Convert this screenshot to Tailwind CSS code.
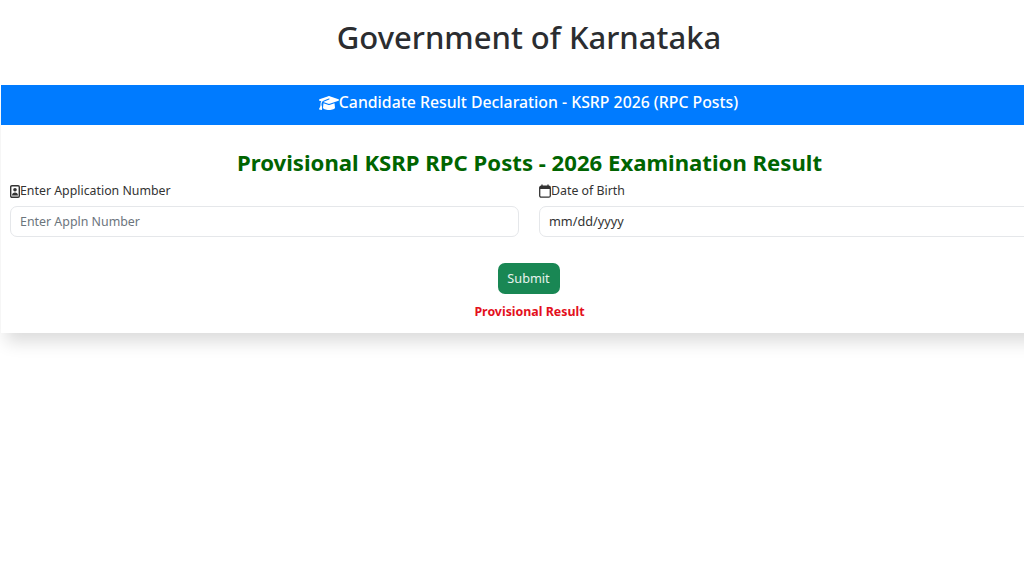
<!DOCTYPE html>
<html lang="en">
<head>
  <meta charset="UTF-8" />
  <meta name="viewport" content="width=device-width, initial-scale=1.0" />
  <title>Government of Karnataka</title>
  <script src="https://cdn.jsdelivr.net/npm/@tailwindcss/browser@4"></script>
</head>
<body class="bg-white h-[583px] overflow-hidden font-['Noto_Sans',sans-serif] text-[#333]">

  <div class="w-[1058px]">
    <h1 class="h-[85px] pt-[15px] text-center text-[31px] leading-[44px] font-medium text-[#2b2d30]">Government of Karnataka</h1>

    <div class="ml-px bg-white shadow-[0_14px_16px_-5px_rgba(0,0,0,0.14)]">
      <div class="h-10 pb-[4px] pr-[2px] bg-[#007bff] flex items-center justify-center text-white text-[15.800px] font-medium">
        <svg class="w-5 h-4 shrink-0" viewBox="0 0 640 512" fill="currentColor"><path d="M320 32c-8 0-16 1.400-23.400 4.100L15.800 137.400C6.300 140.900 0 149.900 0 160s6.300 19.100 15.800 22.600l57.900 20.900C57.300 229.300 48 259.800 48 291.900V320c0 28.400-10.800 57.700-22.300 80.800-6.500 13-13.900 25.800-22.500 37.600-3.200 4.300-4.100 9.900-2.300 15s6 8.900 11.200 10.200l64 16c4.200 1.100 8.700 .3 12.400-2s6.300-6.100 7.100-10.400c8.600-42.800 4.300-81.200-2.100-108.700-3.200-14.200-7.500-28.700-13.500-42V291.900c0-30.200 10.200-58.700 27.900-81.500 12.900-15.500 29.600-28 49.200-35.700l157-61.700c8.200-3.200 17.500 .8 20.700 9s-.8 17.500-9 20.700l-157 61.700c-12.400 4.900-23.300 12.400-32.200 21.600l159.600 57.600c7.600 2.700 15.600 4.100 23.700 4.100s16.100-1.400 23.700-4.100l280.600-101.300c9.500-3.400 15.800-12.500 15.800-22.600s-6.300-19.100-15.800-22.600L343.400 36.100C336 33.400 328 32 320 32zM128 408c0 35.300 86 72 192 72s192-36.700 192-72L496.700 262.600 354.500 314c-11.100 4-22.800 6-34.500 6s-23.500-2-34.500-6L143.300 262.600 128 408z"/></svg>
        <span>Candidate Result Declaration - KSRP 2026 (RPC Posts)</span>
      </div>

      <div class="px-[9px] pt-[22px] pb-[12px]">
        <h2 class="text-center text-[22.150px] leading-[30px] font-bold text-[#006400]">Provisional KSRP RPC Posts - 2026 Examination Result</h2>

        <div class="grid grid-cols-[509px_1fr] gap-5 mt-[2px]">
          <div>
            <label class="flex items-center h-6 text-[12.350px] text-[#333]">
              <svg class="w-[10px] h-[13px] shrink-0" viewBox="0 0 10 13" fill="none"><rect x="0.700" y="0.700" width="8.600" height="11.600" rx="1.200" stroke="currentColor" stroke-width="1.400"/><circle cx="5" cy="4.800" r="1.800" fill="currentColor"/><path d="M2 10.500c0-2 1.300-3 3-3s3 1 3 3z" fill="currentColor"/></svg>
              <span>Enter Application Number</span>
            </label>
            <input type="text" placeholder="Enter Appln Number" class="mt-[3px] w-full h-[31px] px-[9px] rounded-[7px] border border-[#e5e7ea] bg-white text-[12.400px] placeholder:text-[#6c757d]" />
          </div>
          <div>
            <label class="flex items-center h-6 text-[12.350px] text-[#333]">
              <svg class="w-3 h-[14px] shrink-0" viewBox="0 0 12 14" fill="none"><rect x="0.700" y="2.200" width="10.600" height="11" rx="1.500" stroke="currentColor" stroke-width="1.300"/><path d="M1 2h10v3H1z" fill="currentColor"/><path d="M3 0.500v2M9 0.500v2" stroke="currentColor" stroke-width="1.300"/></svg>
              <span>Date of Birth</span>
            </label>
            <div class="mt-[3px] h-[31px] px-[9px] flex items-center rounded-[7px] border border-[#e5e7ea] bg-white text-[12.700px] text-[#333]">mm/dd/yyyy</div>
          </div>
        </div>

        <div class="flex justify-center mt-[26px] pr-[2px]">
          <button class="h-[31px] w-[62px] rounded-[7px] bg-[#198754] text-white/90 text-[12.700px]">Submit</button>
        </div>
        <p class="mt-[9px] text-center text-[12.400px] leading-[18px] font-bold text-[#e3101c]">Provisional Result</p>
      </div>
    </div>
  </div>

</body>
</html>
